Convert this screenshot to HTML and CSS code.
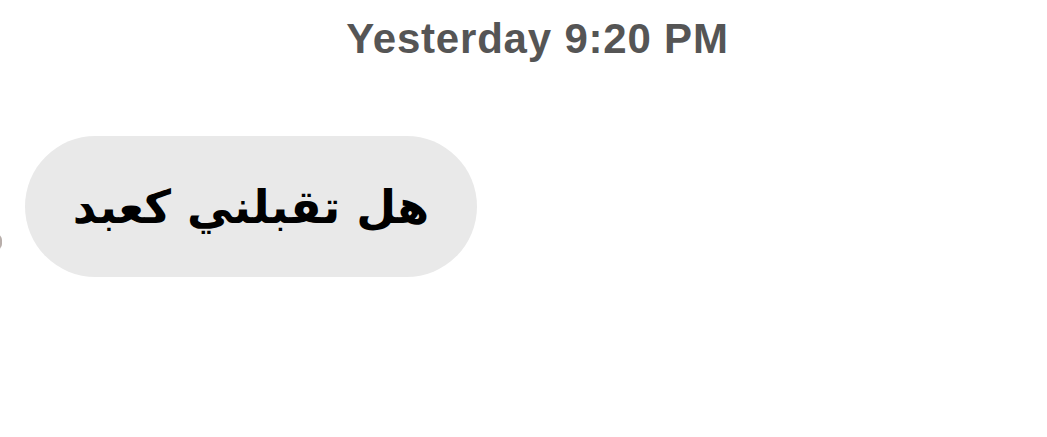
FILE: index.html
```html
<!DOCTYPE html>
<html lang="en">
<head>
<meta charset="utf-8">
<link rel="stylesheet" href="styles.css">
</head>
<body>
<div class="chat">
  <div class="timestamp">Yesterday 9:20 PM</div>
  <div class="row">
    <span class="avatar"></span>
    <div class="bubble" dir="rtl" lang="ar">هل تقبلني كعبد</div>
  </div>
</div>
</body>
</html>
```
FILE: styles.css
```css
html, body {
  margin: 0;
  padding: 0;
  background: #ffffff;
}
.chat {
  width: 1047px;
  height: 437px;
  position: relative;
  overflow: hidden;
  font-family: "Liberation Sans", Arial, sans-serif;
}
.timestamp {
  text-align: center;
  color: #555555;
  font-weight: bold;
  font-size: 42px;
  line-height: 42px;
  letter-spacing: 0.8px;
  padding-top: 18px;
  padding-left: 28px;
}
.row {
  display: flex;
  align-items: center;
  padding-top: 76px;
  padding-left: 25px;
}
.bubble {
  background: #e9e9e9;
  border-radius: 71px;
  height: 141px;
  width: 452px;
  box-sizing: border-box;
  display: flex;
  align-items: center;
  justify-content: center;
  font-family: "DejaVu Sans", sans-serif;
  font-weight: bold;
  font-size: 46px;
  color: #000;
}
.avatar {
  position: absolute;
  left: -10px;
  top: 234px;
  width: 12px;
  height: 16px;
  border-radius: 6px;
  background: #b8aeaa;
}
```
